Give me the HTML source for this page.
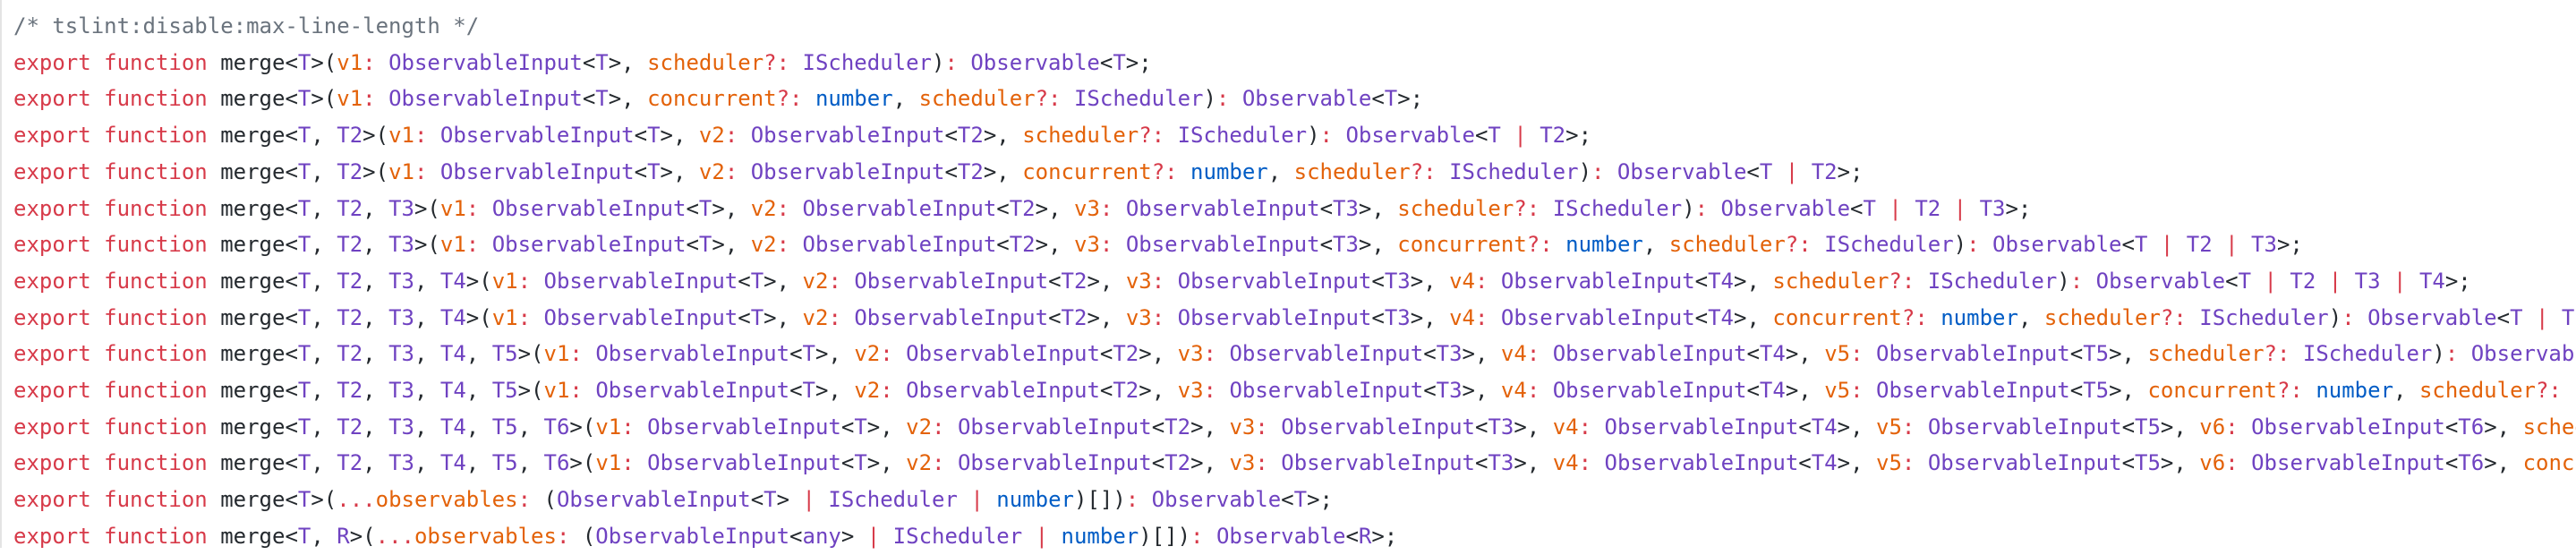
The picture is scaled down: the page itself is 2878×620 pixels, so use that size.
<!DOCTYPE html>
<html><head><meta charset="utf-8"><style>
html,body{margin:0;padding:0;background:#fff;width:2878px;height:612px;overflow:hidden}
.code{position:absolute;left:15px;top:9px;width:2863px;overflow:hidden;font-family:"DejaVu Sans Mono","Liberation Mono",monospace;font-size:24px;line-height:40.7px;white-space:pre;color:#24292e}
.bar{position:absolute;left:0;top:0;width:2px;height:612px;background:#e4e4e4}
k{color:#d73a49}v{color:#e36209}y{color:#6f42c1}n{color:#005cc5}o{color:#d73a49}c{color:#6a737d}
</style></head><body><div class="bar"></div><div class="code"><c>/* tslint:disable:max-line-length */</c>
<k>export</k> <k>function</k> merge&lt;<y>T</y>&gt;(<v>v1</v><o>:</o> <y>ObservableInput</y>&lt;<y>T</y>&gt;, <v>scheduler</v><o>?:</o> <y>IScheduler</y>)<o>:</o> <y>Observable</y>&lt;<y>T</y>&gt;;
<k>export</k> <k>function</k> merge&lt;<y>T</y>&gt;(<v>v1</v><o>:</o> <y>ObservableInput</y>&lt;<y>T</y>&gt;, <v>concurrent</v><o>?:</o> <n>number</n>, <v>scheduler</v><o>?:</o> <y>IScheduler</y>)<o>:</o> <y>Observable</y>&lt;<y>T</y>&gt;;
<k>export</k> <k>function</k> merge&lt;<y>T</y>, <y>T2</y>&gt;(<v>v1</v><o>:</o> <y>ObservableInput</y>&lt;<y>T</y>&gt;, <v>v2</v><o>:</o> <y>ObservableInput</y>&lt;<y>T2</y>&gt;, <v>scheduler</v><o>?:</o> <y>IScheduler</y>)<o>:</o> <y>Observable</y>&lt;<y>T</y> <o>|</o> <y>T2</y>&gt;;
<k>export</k> <k>function</k> merge&lt;<y>T</y>, <y>T2</y>&gt;(<v>v1</v><o>:</o> <y>ObservableInput</y>&lt;<y>T</y>&gt;, <v>v2</v><o>:</o> <y>ObservableInput</y>&lt;<y>T2</y>&gt;, <v>concurrent</v><o>?:</o> <n>number</n>, <v>scheduler</v><o>?:</o> <y>IScheduler</y>)<o>:</o> <y>Observable</y>&lt;<y>T</y> <o>|</o> <y>T2</y>&gt;;
<k>export</k> <k>function</k> merge&lt;<y>T</y>, <y>T2</y>, <y>T3</y>&gt;(<v>v1</v><o>:</o> <y>ObservableInput</y>&lt;<y>T</y>&gt;, <v>v2</v><o>:</o> <y>ObservableInput</y>&lt;<y>T2</y>&gt;, <v>v3</v><o>:</o> <y>ObservableInput</y>&lt;<y>T3</y>&gt;, <v>scheduler</v><o>?:</o> <y>IScheduler</y>)<o>:</o> <y>Observable</y>&lt;<y>T</y> <o>|</o> <y>T2</y> <o>|</o> <y>T3</y>&gt;;
<k>export</k> <k>function</k> merge&lt;<y>T</y>, <y>T2</y>, <y>T3</y>&gt;(<v>v1</v><o>:</o> <y>ObservableInput</y>&lt;<y>T</y>&gt;, <v>v2</v><o>:</o> <y>ObservableInput</y>&lt;<y>T2</y>&gt;, <v>v3</v><o>:</o> <y>ObservableInput</y>&lt;<y>T3</y>&gt;, <v>concurrent</v><o>?:</o> <n>number</n>, <v>scheduler</v><o>?:</o> <y>IScheduler</y>)<o>:</o> <y>Observable</y>&lt;<y>T</y> <o>|</o> <y>T2</y> <o>|</o> <y>T3</y>&gt;;
<k>export</k> <k>function</k> merge&lt;<y>T</y>, <y>T2</y>, <y>T3</y>, <y>T4</y>&gt;(<v>v1</v><o>:</o> <y>ObservableInput</y>&lt;<y>T</y>&gt;, <v>v2</v><o>:</o> <y>ObservableInput</y>&lt;<y>T2</y>&gt;, <v>v3</v><o>:</o> <y>ObservableInput</y>&lt;<y>T3</y>&gt;, <v>v4</v><o>:</o> <y>ObservableInput</y>&lt;<y>T4</y>&gt;, <v>scheduler</v><o>?:</o> <y>IScheduler</y>)<o>:</o> <y>Observable</y>&lt;<y>T</y> <o>|</o> <y>T2</y> <o>|</o> <y>T3</y> <o>|</o> <y>T4</y>&gt;;
<k>export</k> <k>function</k> merge&lt;<y>T</y>, <y>T2</y>, <y>T3</y>, <y>T4</y>&gt;(<v>v1</v><o>:</o> <y>ObservableInput</y>&lt;<y>T</y>&gt;, <v>v2</v><o>:</o> <y>ObservableInput</y>&lt;<y>T2</y>&gt;, <v>v3</v><o>:</o> <y>ObservableInput</y>&lt;<y>T3</y>&gt;, <v>v4</v><o>:</o> <y>ObservableInput</y>&lt;<y>T4</y>&gt;, <v>concurrent</v><o>?:</o> <n>number</n>, <v>scheduler</v><o>?:</o> <y>IScheduler</y>)<o>:</o> <y>Observable</y>&lt;<y>T</y> <o>|</o> <y>T2</y> <o>|</o> <y>T3</y> <o>|</o> <y>T4</y>&gt;;
<k>export</k> <k>function</k> merge&lt;<y>T</y>, <y>T2</y>, <y>T3</y>, <y>T4</y>, <y>T5</y>&gt;(<v>v1</v><o>:</o> <y>ObservableInput</y>&lt;<y>T</y>&gt;, <v>v2</v><o>:</o> <y>ObservableInput</y>&lt;<y>T2</y>&gt;, <v>v3</v><o>:</o> <y>ObservableInput</y>&lt;<y>T3</y>&gt;, <v>v4</v><o>:</o> <y>ObservableInput</y>&lt;<y>T4</y>&gt;, <v>v5</v><o>:</o> <y>ObservableInput</y>&lt;<y>T5</y>&gt;, <v>scheduler</v><o>?:</o> <y>IScheduler</y>)<o>:</o> <y>Observable</y>&lt;<y>T</y> <o>|</o> <y>T2</y> <o>|</o> <y>T3</y> <o>|</o> <y>T4</y> <o>|</o> <y>T5</y>&gt;;
<k>export</k> <k>function</k> merge&lt;<y>T</y>, <y>T2</y>, <y>T3</y>, <y>T4</y>, <y>T5</y>&gt;(<v>v1</v><o>:</o> <y>ObservableInput</y>&lt;<y>T</y>&gt;, <v>v2</v><o>:</o> <y>ObservableInput</y>&lt;<y>T2</y>&gt;, <v>v3</v><o>:</o> <y>ObservableInput</y>&lt;<y>T3</y>&gt;, <v>v4</v><o>:</o> <y>ObservableInput</y>&lt;<y>T4</y>&gt;, <v>v5</v><o>:</o> <y>ObservableInput</y>&lt;<y>T5</y>&gt;, <v>concurrent</v><o>?:</o> <n>number</n>, <v>scheduler</v><o>?:</o> <y>IScheduler</y>)<o>:</o> <y>Observable</y>&lt;<y>T</y> <o>|</o> <y>T2</y>&gt;;
<k>export</k> <k>function</k> merge&lt;<y>T</y>, <y>T2</y>, <y>T3</y>, <y>T4</y>, <y>T5</y>, <y>T6</y>&gt;(<v>v1</v><o>:</o> <y>ObservableInput</y>&lt;<y>T</y>&gt;, <v>v2</v><o>:</o> <y>ObservableInput</y>&lt;<y>T2</y>&gt;, <v>v3</v><o>:</o> <y>ObservableInput</y>&lt;<y>T3</y>&gt;, <v>v4</v><o>:</o> <y>ObservableInput</y>&lt;<y>T4</y>&gt;, <v>v5</v><o>:</o> <y>ObservableInput</y>&lt;<y>T5</y>&gt;, <v>v6</v><o>:</o> <y>ObservableInput</y>&lt;<y>T6</y>&gt;, <v>scheduler</v><o>?:</o> <y>IScheduler</y>)<o>:</o> <y>Observable</y>&lt;<y>T</y>&gt;;
<k>export</k> <k>function</k> merge&lt;<y>T</y>, <y>T2</y>, <y>T3</y>, <y>T4</y>, <y>T5</y>, <y>T6</y>&gt;(<v>v1</v><o>:</o> <y>ObservableInput</y>&lt;<y>T</y>&gt;, <v>v2</v><o>:</o> <y>ObservableInput</y>&lt;<y>T2</y>&gt;, <v>v3</v><o>:</o> <y>ObservableInput</y>&lt;<y>T3</y>&gt;, <v>v4</v><o>:</o> <y>ObservableInput</y>&lt;<y>T4</y>&gt;, <v>v5</v><o>:</o> <y>ObservableInput</y>&lt;<y>T5</y>&gt;, <v>v6</v><o>:</o> <y>ObservableInput</y>&lt;<y>T6</y>&gt;, <v>concurrent</v><o>?:</o> <n>number</n>)<o>:</o> <y>Observable</y>&lt;<y>T</y>&gt;;
<k>export</k> <k>function</k> merge&lt;<y>T</y>&gt;(<o>...</o><v>observables</v><o>:</o> (<y>ObservableInput</y>&lt;<y>T</y>&gt; <o>|</o> <y>IScheduler</y> <o>|</o> <n>number</n>)[])<o>:</o> <y>Observable</y>&lt;<y>T</y>&gt;;
<k>export</k> <k>function</k> merge&lt;<y>T</y>, <y>R</y>&gt;(<o>...</o><v>observables</v><o>:</o> (<y>ObservableInput</y>&lt;<y>any</y>&gt; <o>|</o> <y>IScheduler</y> <o>|</o> <n>number</n>)[])<o>:</o> <y>Observable</y>&lt;<y>R</y>&gt;;</div></body></html>
